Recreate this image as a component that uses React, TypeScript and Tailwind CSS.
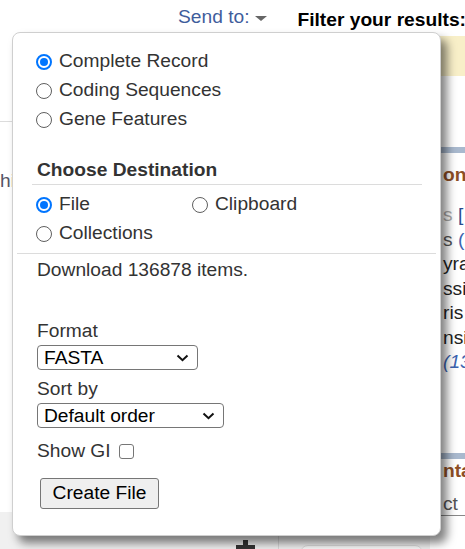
import React from "react";

function Radio({ checked }: { checked?: boolean }) {
  return checked ? (
    <span className="flex h-[16px] w-[16px] shrink-0 items-center justify-center rounded-full border-[2px] border-[#0075ff] bg-white">
      <span className="h-[8px] w-[8px] rounded-full bg-[#0075ff]" />
    </span>
  ) : (
    <span className="h-[16px] w-[16px] shrink-0 rounded-full border-[1.5px] border-[#5f5f5f] bg-white" />
  );
}

function RadioRow({ label, checked, w }: { label: string; checked?: boolean; w?: string }) {
  return (
    <div className={`flex h-[29px] items-center ${w ?? ""}`}>
      <Radio checked={checked} />
      <span className="ml-[7px] text-[#333]">{label}</span>
    </div>
  );
}

function Chevron() {
  return (
    <svg width="13" height="8" viewBox="0 0 13 8" className="shrink-0">
      <polyline points="1.5,1.5 6.5,6.2 11.5,1.5" fill="none" stroke="#111" strokeWidth="2" />
    </svg>
  );
}

function Select({ value, w }: { value: string; w: string }) {
  return (
    <div className={`flex h-[25px] items-center justify-between rounded-[4px] border border-[#767676] bg-white pl-[6px] pr-[8px] ${w}`}>
      <span className="leading-none text-black">{value}</span>
      <Chevron />
    </div>
  );
}

export default function App() {
  return (
    <div className="relative h-[549px] w-[465px] overflow-hidden bg-white font-['Liberation_Sans',Arial,sans-serif] text-[19.2px]">
      {/* background page */}
      <div className="flex h-full flex-col">
        <div className="flex h-[32px] shrink-0 items-start whitespace-nowrap pl-[178px]">
          <span className="mt-[6px] leading-[22px] text-[#3f5d9c]">Send to:</span>
          <span className="ml-[6px] mt-[16px] h-0 w-0 border-l-[6px] border-r-[6px] border-t-[5px] border-l-transparent border-r-transparent border-t-[#666]" />
          <span className="ml-[30px] mt-[9px] font-bold leading-[22px] text-black">Filter your results:</span>
        </div>
        <div className="flex flex-1">
          <div className="flex w-[430px] shrink-0 flex-col">
            <div className="h-[90px] border-b border-[#dcdcdc]" />
            <div className="mt-[48px] leading-[22px] text-[#556]">hi</div>
            <div className="flex-1" />
            <div className="flex h-[37px] bg-[#f0f0f0]">
              <div className="flex w-[279px] items-end justify-end border-r border-[#d8d8d8] pr-[23px]">
                <span className="relative h-[9px] w-[19px]">
                  <span className="absolute bottom-0 left-0 h-[4px] w-[19px] bg-[#333]" />
                  <span className="absolute bottom-0 left-[7px] h-[9px] w-[5px] bg-[#333]" />
                </span>
              </div>
              <div className="ml-[21px] mt-[33px] h-[20px] w-[123px] rounded-t-[8px] border border-[#dcdcdc] bg-[#f8f8f8]" />
            </div>
          </div>
          <div className="flex flex-1 flex-col overflow-hidden whitespace-nowrap">
            <div className="mt-[4px] h-[40px] bg-[#f8efc8]" />
            <div className="mt-[71px] h-[6px] bg-[#a9b9ce]" />
            <div className="mt-[11px] pl-[13px] font-bold leading-[22px] text-[#8e4f26]">on</div>
            <div className="mt-[17px] pl-[13px] leading-[24.5px]"><span className="text-[#aaa]">s</span> <span className="text-[#2a4b8d]">[</span></div>
            <div className="pl-[13px] leading-[24.5px]"><span className="text-[#555]">s</span> <span className="text-[#3b64b0]">(</span></div>
            <div className="pl-[13px] leading-[24.5px] text-[#222]">yrac</div>
            <div className="pl-[13px] leading-[24.5px] text-[#222]">ssin</div>
            <div className="pl-[13px] leading-[24.5px] text-[#222]">ris</div>
            <div className="pl-[13px] leading-[24.5px] text-[#222]">nsi</div>
            <div className="pl-[13px] italic leading-[24.5px] text-[#3b64b0]">(13</div>
            <div className="mt-[78px] h-[6px] bg-[#a9b9ce]" />
            <div className="pl-[13px] font-bold leading-[24px] text-[#8e4f26]">nta</div>
            <div className="mt-[10px] border-b border-[#888] pl-[13px] leading-[22px] text-[#555]">ct</div>
          </div>
        </div>
      </div>

      {/* popup */}
      <div className="absolute left-[12px] top-[32px] flex h-[504px] w-[429px] flex-col rounded-[8px] border border-[#cfcfcf] bg-white shadow-[6px_7px_10px_rgba(0,0,0,0.5)]">
        <div className="pl-[23px] pt-[14px]">
          <RadioRow label="Complete Record" checked />
          <RadioRow label="Coding Sequences" />
          <RadioRow label="Gene Features" />
        </div>
        <div className="ml-[19px] mt-[21px] w-[390px] border-b border-[#dcdcdc] pl-[5px] font-bold leading-[29px] text-[#333]">
          Choose Destination
        </div>
        <div className="mt-[5px] pl-[23px]">
          <div className="flex">
            <RadioRow label="File" checked w="w-[156px]" />
            <RadioRow label="Clipboard" />
          </div>
          <RadioRow label="Collections" />
        </div>
        <div className="mx-[4px] mt-[5px] h-px bg-[#dcdcdc]" />
        <div className="flex flex-col items-start pl-[24px] text-[#333]">
          <div className="mt-[1px] leading-[29px]">Download 136878 items.</div>
          <div className="mt-[32px] leading-[29px]">Format</div>
          <Select value="FASTA" w="w-[161px]" />
          <div className="mt-[4px] leading-[29px]">Sort by</div>
          <Select value="Default order" w="w-[187px]" />
          <div className="mt-[9px] flex h-[29px] items-center">
            <span>Show GI</span>
            <span className="ml-[8px] h-[15px] w-[15px] rounded-[3px] border border-[#767676] bg-white" />
          </div>
          <button className="ml-[3px] mt-[12px] h-[31px] w-[119px] rounded-[3px] border border-[#767676] bg-[#efefef] text-black">
            Create File
          </button>
        </div>
      </div>
    </div>
  );
}
